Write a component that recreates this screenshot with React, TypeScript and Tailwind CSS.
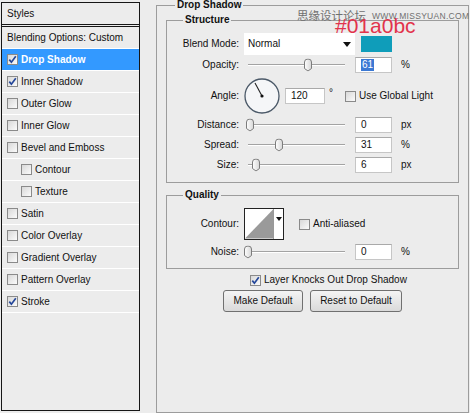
import React from 'react';

const styleItems = [
  { label: 'Drop Shadow', checked: true, selected: true },
  { label: 'Inner Shadow', checked: true },
  { label: 'Outer Glow' },
  { label: 'Inner Glow' },
  { label: 'Bevel and Emboss' },
  { label: 'Contour', sub: true },
  { label: 'Texture', sub: true },
  { label: 'Satin' },
  { label: 'Color Overlay' },
  { label: 'Gradient Overlay' },
  { label: 'Pattern Overlay' },
  { label: 'Stroke', checked: true },
];

function Check({ checked = false }: { checked?: boolean }) {
  return (
    <span className="flex h-[11px] w-[11px] shrink-0 items-center justify-center border border-[#8a8a8a] bg-gradient-to-br from-[#d8d8d8] to-[#fbfbfb]">
      {checked && (
        <svg width="9" height="9" viewBox="0 0 9 9">
          <path d="M1.3 4.6 L3.4 7.2 L7.8 1.2" fill="none" stroke="#24479a" strokeWidth="1.7" />
        </svg>
      )}
    </span>
  );
}

function Slider({ pos }: { pos: number }) {
  return (
    <div className="relative flex h-full w-[106px] items-center">
      <div className="ml-[4px] mr-[5px] h-[2px] flex-1 border-t border-[#a3a3a3] border-b border-b-white" />
      <svg className="absolute top-1/2 -translate-y-1/2" style={{ left: pos }} width="8" height="13" viewBox="0 0 8 13">
        <defs>
          <linearGradient id="th" x1="0" y1="0" x2="1" y2="0">
            <stop offset="0" stopColor="#ffffff" />
            <stop offset="1" stopColor="#d6d6d6" />
          </linearGradient>
        </defs>
        <path d="M0.5 3.5 Q0.5 0.5 4 0.5 Q7.5 0.5 7.5 3.5 V10 L4 12.5 L0.5 10 Z" fill="url(#th)" stroke="#7c7c7c" />
      </svg>
    </div>
  );
}

function Field({ value, w = 'w-[37px]', selected = false }: { value: string; w?: string; selected?: boolean }) {
  return (
    <div className={`${w} flex h-[16px] items-center border border-[#c6c6c6] border-t-[#a9a9a9] bg-white pl-[5px]`}>
      {selected ? <span className="bg-[#3b79d4] px-[1px] leading-[12px] text-white">{value}</span> : <span>{value}</span>}
    </div>
  );
}

function Label({ children }: { children: React.ReactNode }) {
  return <div className="w-[73px] shrink-0 pr-[1px] text-right">{children}</div>;
}

function Legend({ children, ml }: { children: React.ReactNode; ml: string }) {
  return <legend className={`${ml} px-[2px] text-[10px] font-bold leading-[12px]`}>{children}</legend>;
}

export default function App() {
  return (
    <div className="relative flex h-[413px] w-[470px] items-start overflow-hidden bg-[#ececec] font-['Liberation_Sans',Arial,sans-serif] text-[10px] leading-[12px] text-[#111]">
      {/* styles list */}
      <div className="ml-[1px] mt-[2px] h-[409px] w-[139px] shrink-0 border border-[#161616] bg-[#ececec]">
        <div className="flex h-[24px] items-center border-b-[3px] border-double border-[#161616] pl-[5px]">Styles</div>
        <div className="flex h-[22px] items-center border-b border-white pl-[5px]">Blending Options: Custom</div>
        {styleItems.map((it) => (
          <div
            key={it.label}
            className={`flex h-[22px] items-center gap-[3px] border-b border-white ${it.sub ? 'pl-[19px]' : 'pl-[5px]'} ${
              it.selected ? 'bg-[#3399ff] font-bold text-white' : ''
            }`}
          >
            <Check checked={it.checked} />
            <span>{it.label}</span>
          </div>
        ))}
      </div>

      {/* drop shadow panel */}
      <fieldset className="-mt-px ml-[16px] h-[414px] w-[313px] border border-[#9c9c9c]">
        <Legend ml="ml-[18px]">Drop Shadow</Legend>

        <fieldset className="mx-[9px] mt-[3px] border border-[#9c9c9c] pb-[7px]">
          <Legend ml="ml-[16px]">Structure</Legend>

          <div className="mt-[7px] flex h-[22px] items-center gap-[4px]">
            <Label>Blend Mode:</Label>
            <div className="flex h-[22px] w-[111px] items-center justify-between bg-white pl-[4px] pr-[4px]">
              <span>Normal</span>
              <svg width="8" height="5" viewBox="0 0 8 5">
                <path d="M0 0 H8 L4 5 Z" fill="#111" />
              </svg>
            </div>
            <div className="ml-[2px] h-[16px] w-[31px] bg-[#0f9dba]" />
          </div>

          <div className="mt-[1px] flex h-[18px] items-center gap-[4px]">
            <Label>Opacity:</Label>
            <Slider pos={60} />
            <div className="ml-[1px]">
              <Field value="61" selected />
            </div>
            <span className="ml-[5px]">%</span>
          </div>

          <div className="mt-[4px] flex h-[36px] items-center gap-[4px]">
            <Label>Angle:</Label>
            <svg width="36" height="36" viewBox="0 0 36 36">
              <circle cx="18" cy="18" r="17" fill="#f5f6f8" stroke="#4b5968" strokeWidth="1.3" />
              <line x1="18" y1="18" x2="11" y2="5" stroke="#222" strokeWidth="1.1" />
              <circle cx="18" cy="18" r="1.6" fill="#111" />
            </svg>
            <div className="ml-[1px]">
              <Field value="120" w="w-[40px]" />
            </div>
            <span className="self-start pt-[9px]">°</span>
            <div className="ml-[8px] flex items-center gap-[3px]">
              <Check />
              <span>Use Global Light</span>
            </div>
          </div>

          {[
            { l: 'Distance:', p: 2, v: '0', u: 'px' },
            { l: 'Spread:', p: 31, v: '31', u: '%' },
            { l: 'Size:', p: 8, v: '6', u: 'px' },
          ].map((r, i) => (
            <div key={r.l} className={`flex h-[20px] items-center gap-[4px] ${i === 0 ? 'mt-[1px]' : ''}`}>
              <Label>{r.l}</Label>
              <Slider pos={r.p} />
              <div className="ml-[1px]">
                <Field value={r.v} />
              </div>
              <span className="ml-[5px]">{r.u}</span>
            </div>
          ))}
        </fieldset>

        <fieldset className="mx-[9px] mt-[6px] border border-[#9c9c9c] pb-[8px]">
          <Legend ml="ml-[16px]">Quality</Legend>

          <div className="mt-[7px] flex h-[32px] items-center gap-[4px]">
            <Label>Contour:</Label>
            <div className="flex h-[32px] w-[40px] border border-[#222] bg-white">
              <svg width="29" height="30" viewBox="0 0 29 30" className="border-r border-[#999]">
                <polygon points="0,30 29,0 29,30" fill="#9a9a9a" />
              </svg>
              <div className="flex flex-1 items-start justify-center pt-[8px]">
                <svg width="6" height="4" viewBox="0 0 6 4">
                  <path d="M0 0 H6 L3 4 Z" fill="#111" />
                </svg>
              </div>
            </div>
            <div className="ml-[11px] flex items-center gap-[3px]">
              <Check />
              <span>Anti-aliased</span>
            </div>
          </div>

          <div className="mt-[4px] flex h-[16px] items-center gap-[4px]">
            <Label>Noise:</Label>
            <Slider pos={0} />
            <div className="ml-[1px]">
              <Field value="0" />
            </div>
            <span className="ml-[5px]">%</span>
          </div>
        </fieldset>

        <div className="ml-[93px] mt-[5px] flex h-[12px] items-center gap-[3px]">
          <Check checked />
          <span>Layer Knocks Out Drop Shadow</span>
        </div>

        <div className="mt-[4px] flex justify-center gap-[7px]">
          <button className="h-[22px] w-[80px] rounded-[3px] border border-[#707070] bg-gradient-to-b from-[#f4f4f4] to-[#dadada]">
            Make Default
          </button>
          <button className="h-[22px] w-[92px] rounded-[3px] border border-[#707070] bg-gradient-to-b from-[#f4f4f4] to-[#dadada]">
            Reset to Default
          </button>
        </div>
      </fieldset>

      {/* watermark + colour note */}
      <div className="absolute left-[297px] top-[9px] flex items-end gap-[6px] whitespace-nowrap text-[#707070]">
        <span className="font-['Noto_Sans_CJK_SC',sans-serif] text-[11.5px] leading-[13px]">思缘设计论坛</span>
        <span className="text-[8.5px] leading-[11px] tracking-[0.3px]">WWW.MISSYUAN.COM</span>
      </div>
      <div className="absolute left-[335px] top-[16px] text-[21px] leading-[20px] text-[#e2334b]">#01a0bc</div>
    </div>
  );
}
